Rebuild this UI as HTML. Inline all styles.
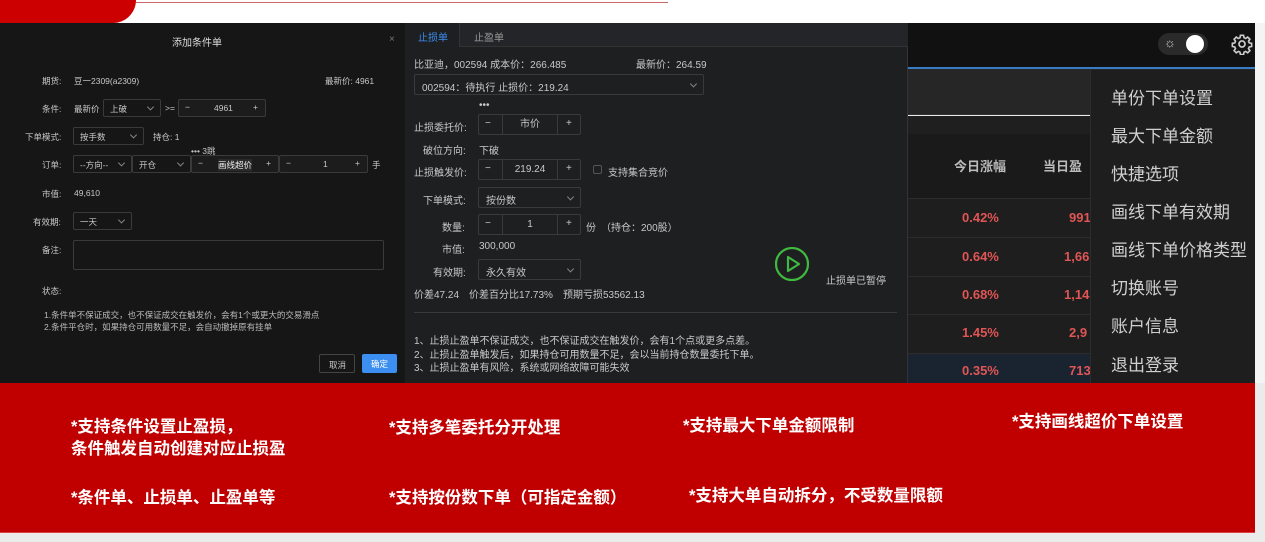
<!DOCTYPE html>
<html><head><meta charset="utf-8"><style>
*{margin:0;padding:0;box-sizing:border-box}
body{width:1265px;height:542px;overflow:hidden;background:#ebebeb;font-family:"Liberation Sans","Noto Sans CJK SC",sans-serif;position:relative}
.a{position:absolute;white-space:nowrap}
.t{color:#c8c8c8;font-size:8.5px}
.box{position:absolute;border:1px solid #3a3a3a;border-radius:2px}
.dd:after{content:"";position:absolute;right:7px;top:50%;width:4px;height:4px;border-right:1px solid #888;border-bottom:1px solid #888;transform:translateY(-70%) rotate(45deg)}
.m{color:#c8c8c8;font-size:10px}
.menu div{position:absolute;left:20px;color:#d0d0d0;font-size:17px}
.red{color:#e05555;font-size:13px;font-weight:bold}
.w{color:#fff;font-size:16.5px;font-weight:bold;line-height:22px}
</style></head><body>
<div class="a" style="left:0;top:0;width:1265px;height:23px;background:#fff"></div>
<div class="a" style="left:0;top:0;width:136px;height:23px;background:#c00;border-bottom-right-radius:40px"></div>
<div class="a" style="left:136px;top:2px;width:532px;height:1px;background:#c66"></div>
<div class="a" style="left:1255px;top:23px;width:10px;height:360px;background:#f4f4f4"></div>

<!-- left dialog -->
<div class="a" style="left:0;top:23px;width:405px;height:360px;background:#161616"></div>
<div class="a" style="left:172px;top:34px;color:#ddd;font-size:10px">添加条件单</div>
<div class="a" style="left:389px;top:34px;color:#777;font-size:10px">×</div>
<div class="a t" style="left:42px;top:75px">期货:</div><div class="a t" style="left:74px;top:75px">豆一2309(a2309)</div>
<div class="a t" style="left:325px;top:75px">最新价: 4961</div>
<div class="a t" style="left:42px;top:103px">条件:</div><div class="a t" style="left:74px;top:103px">最新价</div>
<div class="box dd" style="left:103px;top:99px;width:58px;height:18px"><span class="t" style="position:absolute;left:6px;top:3px">上破</span></div>
<div class="a t" style="left:165px;top:103px">&gt;=</div>
<div class="box" style="left:178px;top:99px;width:88px;height:18px;background:#1c1c1c"><span class="t" style="position:absolute;left:6px;top:2px">−</span><span class="t" style="position:absolute;left:35px;top:3px">4961</span><span class="t" style="position:absolute;left:74px;top:2px">+</span></div>
<div class="a t" style="left:25px;top:131px">下单模式:</div>
<div class="box dd" style="left:73px;top:127px;width:71px;height:18px"><span class="t" style="position:absolute;left:6px;top:3px">按手数</span></div>
<div class="a t" style="left:153px;top:131px">持仓: 1</div>
<div class="a t" style="left:191px;top:145px">••• 3跳</div>
<div class="a t" style="left:42px;top:159px">订单:</div>
<div class="box dd" style="left:73px;top:155px;width:59px;height:18px"><span class="t" style="position:absolute;left:6px;top:3px">--方向--</span></div>
<div class="box dd" style="left:132px;top:155px;width:59px;height:18px"><span class="t" style="position:absolute;left:6px;top:3px">开仓</span></div>
<div class="box" style="left:191px;top:155px;width:88px;height:18px;background:#1c1c1c"><span class="t" style="position:absolute;left:6px;top:2px">−</span><span class="t" style="position:absolute;left:26px;top:3px;color:#eee;background:#2a2a2a">画线超价</span><span class="t" style="position:absolute;left:74px;top:2px">+</span></div>
<div class="box" style="left:279px;top:155px;width:89px;height:18px;background:#1c1c1c"><span class="t" style="position:absolute;left:6px;top:2px">−</span><span class="t" style="position:absolute;left:43px;top:3px">1</span><span class="t" style="position:absolute;left:75px;top:2px">+</span></div>
<div class="a t" style="left:372px;top:159px">手</div>
<div class="a t" style="left:42px;top:188px">市值:</div><div class="a t" style="left:74px;top:188px">49,610</div>
<div class="a t" style="left:33px;top:216px">有效期:</div>
<div class="box dd" style="left:73px;top:212px;width:59px;height:18px"><span class="t" style="position:absolute;left:6px;top:3px">一天</span></div>
<div class="a t" style="left:42px;top:244px">备注:</div>
<div class="box" style="left:73px;top:240px;width:311px;height:30px"></div>
<div class="a t" style="left:42px;top:285px">状态:</div>
<div class="a t" style="left:44px;top:309px;color:#bbb">1.条件单不保证成交，也不保证成交在触发价，会有1个或更大的交易滑点</div>
<div class="a t" style="left:44px;top:321px;color:#bbb">2.条件平仓时，如果持仓可用数量不足，会自动撤掉原有挂单</div>
<div class="box" style="left:319px;top:354px;width:36px;height:19px;border-color:#444"><span class="t" style="position:absolute;left:9px;top:4px">取消</span></div>
<div class="a" style="left:362px;top:354px;width:35px;height:19px;background:#3c8ff0;border-radius:2px"><span class="t" style="position:absolute;left:9px;top:4px;color:#fff">确定</span></div>

<!-- middle panel -->
<div class="a" style="left:405px;top:23px;width:503px;height:360px;background:#1e1f21;border-right:1px solid #333"></div>
<div class="a" style="left:405px;top:23px;width:503px;height:24px;background:#242528;border-bottom:1px solid #333"></div>
<div class="a" style="left:405px;top:23px;width:55px;height:24px;background:#1e1f21;border-right:1px solid #333"></div>
<div class="a m" style="left:418px;top:29px;color:#3b8cf0">止损单</div>
<div class="a m" style="left:474px;top:29px;color:#999">止盈单</div>
<div class="a m" style="left:414px;top:56px">比亚迪，002594  成本价：266.485</div>
<div class="a m" style="left:636px;top:56px">最新价：264.59</div>
<div class="box dd" style="left:414px;top:74px;width:290px;height:21px"><span class="m" style="position:absolute;left:7px;top:4px">002594：待执行 止损价：219.24</span></div>
<div class="a m" style="left:479px;top:100px">•••</div>
<div class="a m" style="left:414px;top:119px">止损委托价:</div>
<div class="box" style="left:478px;top:114px;width:103px;height:21px"><span class="m" style="position:absolute;left:6px;top:3px">−</span><span class="m" style="position:absolute;left:23px;top:0;width:56px;height:19px;border-left:1px solid #3a3a3a;border-right:1px solid #3a3a3a;text-align:center;line-height:19px">市价</span><span class="m" style="position:absolute;left:87px;top:3px">+</span></div>
<div class="a m" style="left:423px;top:142px">破位方向:</div><div class="a m" style="left:479px;top:142px">下破</div>
<div class="a m" style="left:414px;top:164px">止损触发价:</div>
<div class="box" style="left:478px;top:159px;width:103px;height:21px"><span class="m" style="position:absolute;left:6px;top:3px">−</span><span class="m" style="position:absolute;left:23px;top:0;width:56px;height:19px;border-left:1px solid #3a3a3a;border-right:1px solid #3a3a3a;text-align:center;line-height:19px">219.24</span><span class="m" style="position:absolute;left:87px;top:3px">+</span></div>
<div class="box" style="left:593px;top:165px;width:9px;height:9px;border-color:#555"></div>
<div class="a m" style="left:608px;top:164px">支持集合竞价</div>
<div class="a m" style="left:423px;top:192px">下单模式:</div>
<div class="box dd" style="left:478px;top:187px;width:103px;height:21px"><span class="m" style="position:absolute;left:7px;top:4px">按份数</span></div>
<div class="a m" style="left:442px;top:219px">数量:</div>
<div class="box" style="left:478px;top:214px;width:103px;height:21px"><span class="m" style="position:absolute;left:6px;top:3px">−</span><span class="m" style="position:absolute;left:23px;top:0;width:56px;height:19px;border-left:1px solid #3a3a3a;border-right:1px solid #3a3a3a;text-align:center;line-height:19px">1</span><span class="m" style="position:absolute;left:87px;top:3px">+</span></div>
<div class="a m" style="left:586px;top:219px">份　（持仓：200股）</div>
<div class="a m" style="left:442px;top:241px">市值:</div><div class="a m" style="left:479px;top:241px">300,000</div>
<div class="a m" style="left:433px;top:264px">有效期:</div>
<div class="box dd" style="left:478px;top:259px;width:103px;height:21px"><span class="m" style="position:absolute;left:7px;top:4px">永久有效</span></div>
<div class="a m" style="left:414px;top:286px">价差47.24　价差百分比17.73%　预期亏损53562.13</div>
<svg class="a" style="left:773px;top:245px" width="38" height="38" viewBox="0 0 38 38"><circle cx="19" cy="19" r="16" fill="none" stroke="#3fb93f" stroke-width="2.2"/><path d="M15 12 L26 19 L15 26 Z" fill="none" stroke="#3fb93f" stroke-width="2.2" stroke-linejoin="round"/></svg>
<div class="a m" style="left:826px;top:272px">止损单已暂停</div>
<div class="a" style="left:414px;top:312px;width:483px;height:1px;background:#3a3a3a"></div>
<div class="a m" style="left:414px;top:332px">1、止损止盈单不保证成交，也不保证成交在触发价，会有1个点或更多点差。</div>
<div class="a m" style="left:414px;top:346px">2、止损止盈单触发后，如果持仓可用数量不足，会以当前持仓数量委托下单。</div>
<div class="a m" style="left:414px;top:359px">3、止损止盈单有风险，系统或网络故障可能失效</div>

<!-- right region -->
<div class="a" style="left:908px;top:23px;width:347px;height:45px;background:#111"></div>
<div class="a" style="left:1158px;top:33px;width:50px;height:22px;background:#2a2a2a;border-radius:11px"></div>
<div class="a" style="left:1186px;top:35px;width:18px;height:18px;background:#fff;border-radius:50%"></div>
<div class="a" style="left:1164px;top:35px;color:#ccc;font-size:13px">☼</div>
<svg class="a" style="left:1231px;top:33px" width="22" height="22" viewBox="0 0 24 24"><path fill="none" stroke="#ccc" stroke-width="1.8" d="M10.3 2.5h3.4l.5 2.6 1.8.8 2.2-1.5 2.4 2.4-1.5 2.2.8 1.8 2.6.5v3.4l-2.6.5-.8 1.8 1.5 2.2-2.4 2.4-2.2-1.5-1.8.8-.5 2.6h-3.4l-.5-2.6-1.8-.8-2.2 1.5-2.4-2.4 1.5-2.2-.8-1.8-2.6-.5v-3.4l2.6-.5.8-1.8-1.5-2.2 2.4-2.4 2.2 1.5 1.8-.8z"/><circle cx="12" cy="12" r="3.3" fill="none" stroke="#ccc" stroke-width="1.8"/></svg>
<div class="a" style="left:908px;top:67px;width:347px;height:2px;background:#3a7cc4"></div>
<div class="a" style="left:908px;top:69px;width:347px;height:46px;background:#262626;border-bottom:1px solid #333"></div>
<div class="a" style="left:908px;top:116px;width:347px;height:18px;background:#1f1f1f"></div>
<div class="a" style="left:908px;top:134px;width:347px;height:64px;background:#1a1a1a"></div>
<div class="a" style="left:954px;top:156px;color:#bbb;font-size:13px;font-weight:bold">今日涨幅</div>
<div class="a" style="left:1043px;top:156px;color:#bbb;font-size:13px;font-weight:bold">当日盈</div>
<div class="a" style="left:908px;top:198px;width:347px;height:39px;background:#1e1e1e;border-top:1px solid #2c2c2c"></div>
<div class="a" style="left:908px;top:237px;width:347px;height:39px;background:#1e1e1e;border-top:1px solid #2c2c2c"></div>
<div class="a" style="left:908px;top:276px;width:347px;height:38px;background:#1e1e1e;border-top:1px solid #2c2c2c"></div>
<div class="a" style="left:908px;top:314px;width:347px;height:39px;background:#1e1e1e;border-top:1px solid #2c2c2c"></div>
<div class="a" style="left:908px;top:353px;width:347px;height:30px;background:#1a2430;border-top:1px solid #2c2c2c"></div>
<div class="a red" style="left:962px;top:210px">0.42%</div><div class="a red" style="left:1069px;top:210px">991</div>
<div class="a red" style="left:962px;top:249px">0.64%</div><div class="a red" style="left:1064px;top:249px">1,66</div>
<div class="a red" style="left:962px;top:287px">0.68%</div><div class="a red" style="left:1064px;top:287px">1,14</div>
<div class="a red" style="left:962px;top:325px">1.45%</div><div class="a red" style="left:1069px;top:325px">2,9</div>
<div class="a red" style="left:962px;top:363px">0.35%</div><div class="a red" style="left:1069px;top:363px">713</div>
<div class="a menu" style="left:1090px;top:70px;width:165px;height:313px;background:#1e1e1e;border-left:1px solid #2c2c2c">
<div style="top:14px">单份下单设置</div><div style="top:52px">最大下单金额</div><div style="top:90px">快捷选项</div><div style="top:128px">画线下单有效期</div><div style="top:166px">画线下单价格类型</div><div style="top:204px">切换账号</div><div style="top:242px">账户信息</div><div style="top:281px">退出登录</div>
</div>

<!-- red band -->
<div class="a" style="left:0;top:383px;width:1255px;height:150px;background:#c00000;border-bottom:1px solid #e04040"></div>
<div class="a w" style="left:71px;top:416px">*支持条件设置止盈损，<br>条件触发自动创建对应止损盈</div>
<div class="a w" style="left:389px;top:417px">*支持多笔委托分开处理</div>
<div class="a w" style="left:683px;top:415px">*支持最大下单金额限制</div>
<div class="a w" style="left:1012px;top:411px">*支持画线超价下单设置</div>
<div class="a w" style="left:71px;top:487px">*条件单、止损单、止盈单等</div>
<div class="a w" style="left:389px;top:487px">*支持按份数下单（可指定金额）</div>
<div class="a w" style="left:689px;top:485px">*支持大单自动拆分，不受数量限额</div>
</body></html>
